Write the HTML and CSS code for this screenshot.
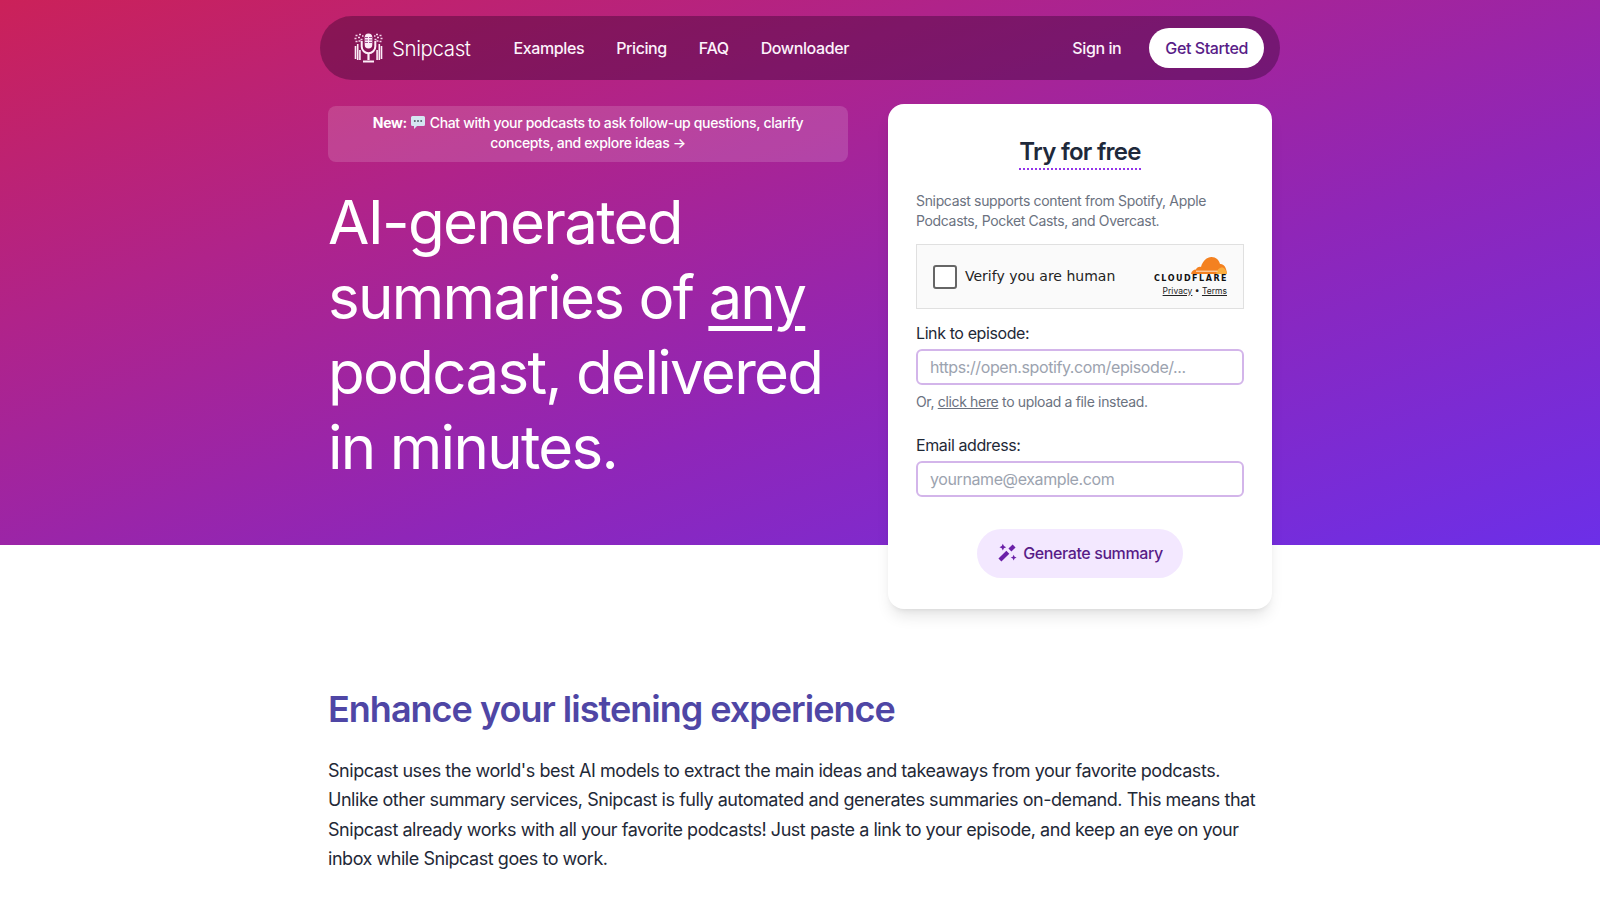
FILE: index.html
```html
<!DOCTYPE html>
<html lang="en">
<head>
  <meta charset="UTF-8" />
  <title>Snipcast</title>
  <link rel="stylesheet" href="styles.css">
</head>
<body>

  <!-- Hero -->
  <header class="hero">
    <nav class="navbar">
      <a class="brand" href="#">
        <svg class="brand-icon" viewBox="0 0 28 30" aria-hidden="true">
          <rect x="10.200" y="0.500" width="7.600" height="15" rx="3.800" fill="#fdeef8"/>
          <path d="M10.500 4.500h3M10.500 7h3M10.500 9.500h3M14.500 4.500h3M14.500 7h3M14.500 9.500h3" stroke="#8a2a78" stroke-width=".8"/>
          <path d="M7.200 8v5.500a6.800 6.800 0 0 0 13.600 0V8" fill="none" stroke="#fdeef8" stroke-width="2"/>
          <path d="M14 20.500V27M8.500 28.500h11" stroke="#fdeef8" stroke-width="2.200"/>
          <path d="M1 13v13M3.200 11v16M5.400 17v10M22.600 17v10M24.800 11v16M27 13v13" stroke="#fdeef8" stroke-width="1.600"/>
          <path d="M1 2.500h2M4.500 1.500h2M7.500 3h1.500M0 5.500h2M3.500 4.500h2M6 6.500h2M1 8.500h2M4 8h2M19.500 3h1.500M21.500 1.500h2M25 2.500h2M22.500 4.500h2M26 5.500h2M20 6.500h2M22 8h2M25 8.500h2" stroke="#f6d3ec" stroke-width="1.500"/>
        </svg>
        <span>Snipcast</span>
      </a>
      <ul class="nav-links">
        <li><a href="#">Examples</a></li>
        <li><a href="#">Pricing</a></li>
        <li><a href="#">FAQ</a></li>
        <li><a href="#">Downloader</a></li>
      </ul>
      <a class="sign-in" href="#">Sign in</a>
      <a class="get-started" href="#">Get Started</a>
    </nav>

    <div class="hero-grid">
      <div class="hero-left">
        <a class="banner" href="#">
          <strong>New:</strong>
          <svg class="bubble" viewBox="0 0 16 15" aria-hidden="true">
            <path d="M2.500 1h11A1.500 1.500 0 0 1 15 2.500v7a1.500 1.500 0 0 1-1.500 1.500H7l-3 3v-3H2.500A1.500 1.500 0 0 1 1 9.500v-7A1.500 1.500 0 0 1 2.500 1z" fill="#d5e6f2"/>
            <circle cx="4.800" cy="6" r="1" fill="#56606a"/>
            <circle cx="8" cy="6" r="1" fill="#56606a"/>
            <circle cx="11.200" cy="6" r="1" fill="#56606a"/>
          </svg>
          Chat with your podcasts to ask follow-up questions, clarify concepts, and explore ideas →
        </a>
        <h1>AI-generated summaries of <u>any</u> podcast, delivered in minutes.</h1>
      </div>

      <!-- Formulario -->
      <form class="card">
        <h2><span>Try for free</span></h2>
        <p class="muted">Snipcast supports content from Spotify, Apple Podcasts, Pocket Casts, and Overcast.</p>

        <div class="turnstile">
          <span class="check"></span>
          <span class="verify">Verify you are human</span>
          <div class="cf">
            <svg class="cf-cloud" viewBox="0 0 36 17" aria-hidden="true">
              <path d="M0 17c.5-3 2.500-4.500 5-4.500.8-2 2.800-3 5-2.500C11.500 4 16 0 20.500 0c4.500 0 7.500 3 8.500 7 3.500-.5 6.500 3 7 10z" fill="#f48120"/>
              <path d="M25 17c1-4 3-6.500 6-6.800 2.500.5 4.500 3 5 6.800z" fill="#faad3f"/>
              <path d="M5 14.200h21.500" stroke="#fff" stroke-width=".8"/>
            </svg>
            <div class="cf-name">CLOUDFLARE</div>
            <div class="cf-links"><a href="#">Privacy</a> • <a href="#">Terms</a></div>
          </div>
        </div>

        <label for="episode">Link to episode:</label>
        <input id="episode" type="text" placeholder="https://open.spotify.com/episode/...">
        <p class="muted upload">Or, <a href="#">click here</a> to upload a file instead.</p>

        <label class="label-email" for="email">Email address:</label>
        <input id="email" type="text" placeholder="yourname@example.com">

        <div class="submit-row">
          <button type="button" class="generate">
            <svg class="wand" viewBox="0 0 24 24" aria-hidden="true">
              <path d="M3.500 20.500l9.500-9.500M15.500 8.500l5-5" stroke="#6b21a8" stroke-width="5"/>
              <path d="M7 1l1.300 2.700L11 5 8.300 6.300 7 9 5.700 6.300 3 5l2.700-1.300zM20 14l1.100 2.400 2.400 1.100-2.400 1.100L20 21l-1.100-2.400-2.400-1.100 2.400-1.100z"/>
            </svg>
            Generate summary
          </button>
        </div>
      </form>
    </div>
  </header>

  <!-- Contenido -->
  <main class="contenido">
    <h3>Enhance your listening experience</h3>
    <p>Snipcast uses the world's best AI models to extract the main ideas and takeaways from your favorite podcasts. Unlike other summary services, Snipcast is fully automated and generates summaries on-demand. This means that Snipcast already works with all your favorite podcasts! Just paste a link to your episode, and keep an eye on your inbox while Snipcast goes to work.</p>
  </main>

</body>
</html>
```

FILE: styles.css
```css
body {
  margin: 0;
  background: white;
  color: #1f2937;
  font-family: Inter, "Liberation Sans", sans-serif;
  letter-spacing: -0.025em;
}

a {
  color: inherit;
  text-decoration: none;
}

.hero {
  height: 545px;
  padding-top: 16px;
  box-sizing: border-box;
  background: linear-gradient(to bottom right, #cb2159 0%, #b0238a 30%, #8f26b8 62%, #6c2fe8 100%);
}

.navbar {
  width: 960px;
  height: 64px;
  margin: 0 auto;
  padding: 0 16px 0 34px;
  box-sizing: border-box;
  display: flex;
  align-items: center;
  border-radius: 32px;
  background-color: rgba(40, 0, 40, 0.36);
  color: #fdf2fb;
}

.brand {
  display: flex;
  align-items: center;
  gap: 9px;
  font-size: 20.500px;
  font-weight: 300;
  color: white;
}

.brand-icon {
  width: 29px;
  height: 30px;
}

.nav-links {
  display: flex;
  gap: 32px;
  flex: 1;
  list-style-type: none;
  margin: 0 0 0 43px;
  padding: 0;
  font-size: 16px;
  font-weight: 500;
}

.sign-in {
  font-weight: 500;
  font-size: 16px;
  margin-right: 28px;
}

.get-started {
  height: 40px;
  line-height: 40px;
  padding: 0 16px;
  border-radius: 20px;
  background-color: white;
  color: #581c87;
  font-size: 16px;
  font-weight: 500;
}

.hero-grid {
  width: 944px;
  margin: 24px auto 0;
  display: flex;
  justify-content: space-between;
  align-items: flex-start;
}

.hero-left {
  width: 520px;
  color: white;
}

.banner {
  display: block;
  margin-top: 2px;
  padding: 7px 24px 9px;
  border-radius: 8px;
  background-color: rgba(255, 255, 255, 0.15);
  font-size: 14px;
  line-height: 20px;
  font-weight: 500;
  text-align: center;
  letter-spacing: -0.024em;
}

.banner strong {
  font-weight: 700;
}

.bubble {
  width: 16px;
  height: 15px;
  vertical-align: -2px;
}

h1 {
  margin: 23px 0 0;
  font-size: 60px;
  line-height: 75px;
  font-weight: 400;
  letter-spacing: -0.0285em;
}

h1 u {
  text-underline-offset: 7px;
  text-decoration-thickness: 5px;
}

.card {
  width: 384px;
  height: 505px;
  padding: 32px 28px;
  box-sizing: border-box;
  border-radius: 16px;
  background-color: white;
  box-shadow: 0 10px 15px -3px rgba(0, 0, 0, 0.1), 0 4px 6px -4px rgba(0, 0, 0, 0.1);
}

.card h2 {
  margin: 0;
  text-align: center;
  font-size: 24px;
  line-height: 32px;
  font-weight: 600;
  letter-spacing: -0.03em;
  color: #1e293b;
}

.card h2 span {
  display: inline-block;
  border-bottom: 2px dotted #9333ea;
}

.muted {
  margin: 0;
  font-size: 14px;
  line-height: 20px;
  letter-spacing: -0.024em;
  color: #6b7280;
}

.card h2 + .muted {
  margin-top: 21px;
}

.turnstile {
  height: 65px;
  margin-top: 13px;
  margin-bottom: 12px;
  padding: 0 16px;
  box-sizing: border-box;
  display: flex;
  align-items: center;
  background-color: #fafafa;
  border: 1px solid #e0e0e0;
}

.check {
  width: 24px;
  height: 24px;
  box-sizing: border-box;
  border: 2px solid #666;
  border-radius: 3px;
  background-color: white;
}

.verify {
  flex: 1;
  margin-left: 8px;
  margin-bottom: 2px;
  font-family: "DejaVu Sans", sans-serif;
  font-size: 14px;
  letter-spacing: 0;
  color: #232323;
}

.cf {
  display: flex;
  flex-direction: column;
  align-items: flex-end;
}

.cf-cloud {
  width: 36px;
  height: 17px;
  display: block;
}

.cf-name {
  font-family: "DejaVu Sans", sans-serif;
  font-size: 8px;
  line-height: 10px;
  font-weight: 700;
  letter-spacing: 1.500px;
  margin-right: -1px;
  color: #111;
}

.cf-links {
  margin-top: 2px;
  font-size: 8.500px;
  line-height: 10px;
  letter-spacing: 0;
  color: #232323;
}

.cf-links a {
  text-decoration: underline;
}

.card label {
  display: block;
  font-size: 16px;
  line-height: 24px;
  color: #1f2937;
  margin-bottom: 4px;
}

.card input {
  display: block;
  width: 100%;
  height: 36px;
  padding: 0 12px;
  box-sizing: border-box;
  border: 2px solid #d3b5ea;
  border-radius: 6px;
  font-family: inherit;
  font-size: 16px;
  letter-spacing: inherit;
  outline: none;
}

.card input::placeholder {
  color: #9ca3af;
}

.upload {
  margin-top: 7px;
}

.upload a {
  text-decoration: underline;
}

.card .label-email {
  margin-top: 21px;
}

.submit-row {
  display: flex;
  justify-content: center;
  margin-top: 32px;
}

.generate {
  height: 49px;
  padding: 0 20px 2px;
  display: flex;
  align-items: center;
  gap: 6px;
  border: none;
  border-radius: 25px;
  background-color: #f3e8ff;
  color: #581c87;
  font-family: inherit;
  font-size: 16px;
  font-weight: 500;
  letter-spacing: inherit;
}

.wand {
  width: 20px;
  height: 20px;
  fill: #6b21a8;
}

.contenido {
  width: 944px;
  margin: 144px auto 0;
  padding-bottom: 40px;
}

.contenido h3 {
  margin: 0;
  font-size: 36px;
  line-height: 40px;
  font-weight: 600;
  letter-spacing: -0.0275em;
  color: #4f46a5;
}

.contenido p {
  margin: 27px 0 0;
  font-size: 18px;
  line-height: 29.250px;
  letter-spacing: -0.0257em;
  color: #1f2937;
}
```
